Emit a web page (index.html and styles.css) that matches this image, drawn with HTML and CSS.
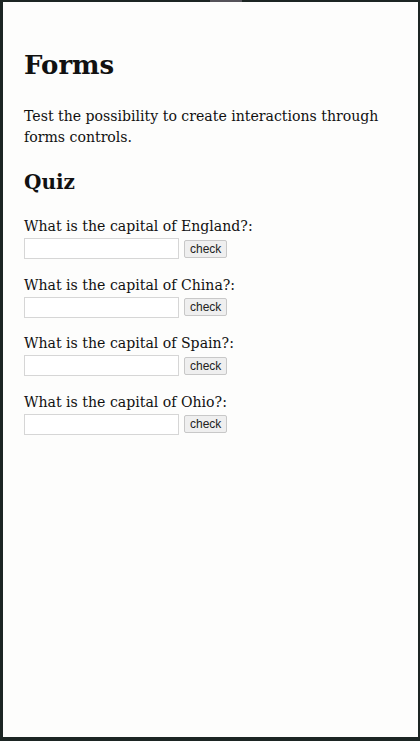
FILE: index.html
```html
<!DOCTYPE html>
<html>
<head>
<meta charset="utf-8">
<link rel="stylesheet" href="styles.css">
</head>
<body>
<div class="frame">
  <div class="notch"></div>
  <main class="content">
    <h1 class="title">Forms</h1>
    <p class="intro">Test the possibility to create interactions through forms controls.</p>
    <h2 class="subtitle">Quiz</h2>
    <form class="quiz">
      <div class="question">
        <label class="q-label">What is the capital of England?:</label>
        <div class="q-row"><input class="q-input" type="text"><button type="button" class="q-btn">check</button></div>
      </div>
      <div class="question">
        <label class="q-label">What is the capital of China?:</label>
        <div class="q-row"><input class="q-input" type="text"><button type="button" class="q-btn">check</button></div>
      </div>
      <div class="question">
        <label class="q-label">What is the capital of Spain?:</label>
        <div class="q-row"><input class="q-input" type="text"><button type="button" class="q-btn">check</button></div>
      </div>
      <div class="question">
        <label class="q-label">What is the capital of Ohio?:</label>
        <div class="q-row"><input class="q-input" type="text"><button type="button" class="q-btn">check</button></div>
      </div>
    </form>
  </main>
</div>
</body>
</html>
```
FILE: styles.css
```css
html, body {
  margin: 0;
  padding: 0;
}
body {
  width: 420px;
  height: 741px;
  overflow: hidden;
  background: #1c2523;
}
.frame {
  position: relative;
  box-sizing: border-box;
  width: 420px;
  height: 741px;
  border-style: solid;
  border-color: #1c2523;
  border-width: 2px 2px 4px 3px;
  background: #fdfdfc;
  font-family: "DejaVu Serif", serif;
  color: #111;
}
.notch {
  position: absolute;
  top: -2px;
  left: 207px;
  width: 32px;
  height: 2px;
  background: #55535a;
}
.content {
  padding: 46px 21px 0 21px;
}
.title {
  margin: 0;
  font-size: 26px;
  line-height: 34px;
  font-weight: bold;
}
.intro {
  margin: 24px 0 0 0;
  font-size: 14.1px;
  line-height: 21px;
}
.subtitle {
  margin: 20px 0 0 0;
  font-size: 20px;
  line-height: 28px;
  font-weight: bold;
}
.quiz {
  margin: 20px 0 0 0;
  display: flex;
  flex-direction: column;
  gap: 15.5px;
}
.question {
  display: flex;
  flex-direction: column;
}
.q-label {
  font-size: 14.1px;
  line-height: 21px;
}
.q-row {
  display: flex;
  align-items: center;
  gap: 5px;
  margin-top: 1px;
}
.q-input {
  box-sizing: border-box;
  width: 155px;
  height: 21px;
  margin: 0;
  border: 1px solid #d6d6d6;
  background: #fff;
}
.q-btn {
  box-sizing: border-box;
  height: 18px;
  padding: 0 5px;
  margin: 0;
  font-family: "Liberation Sans", Arial, sans-serif;
  font-size: 12px;
  color: #222;
  background: #efefef;
  border: 1px solid #c8c8c8;
  border-radius: 2px;
}
```
